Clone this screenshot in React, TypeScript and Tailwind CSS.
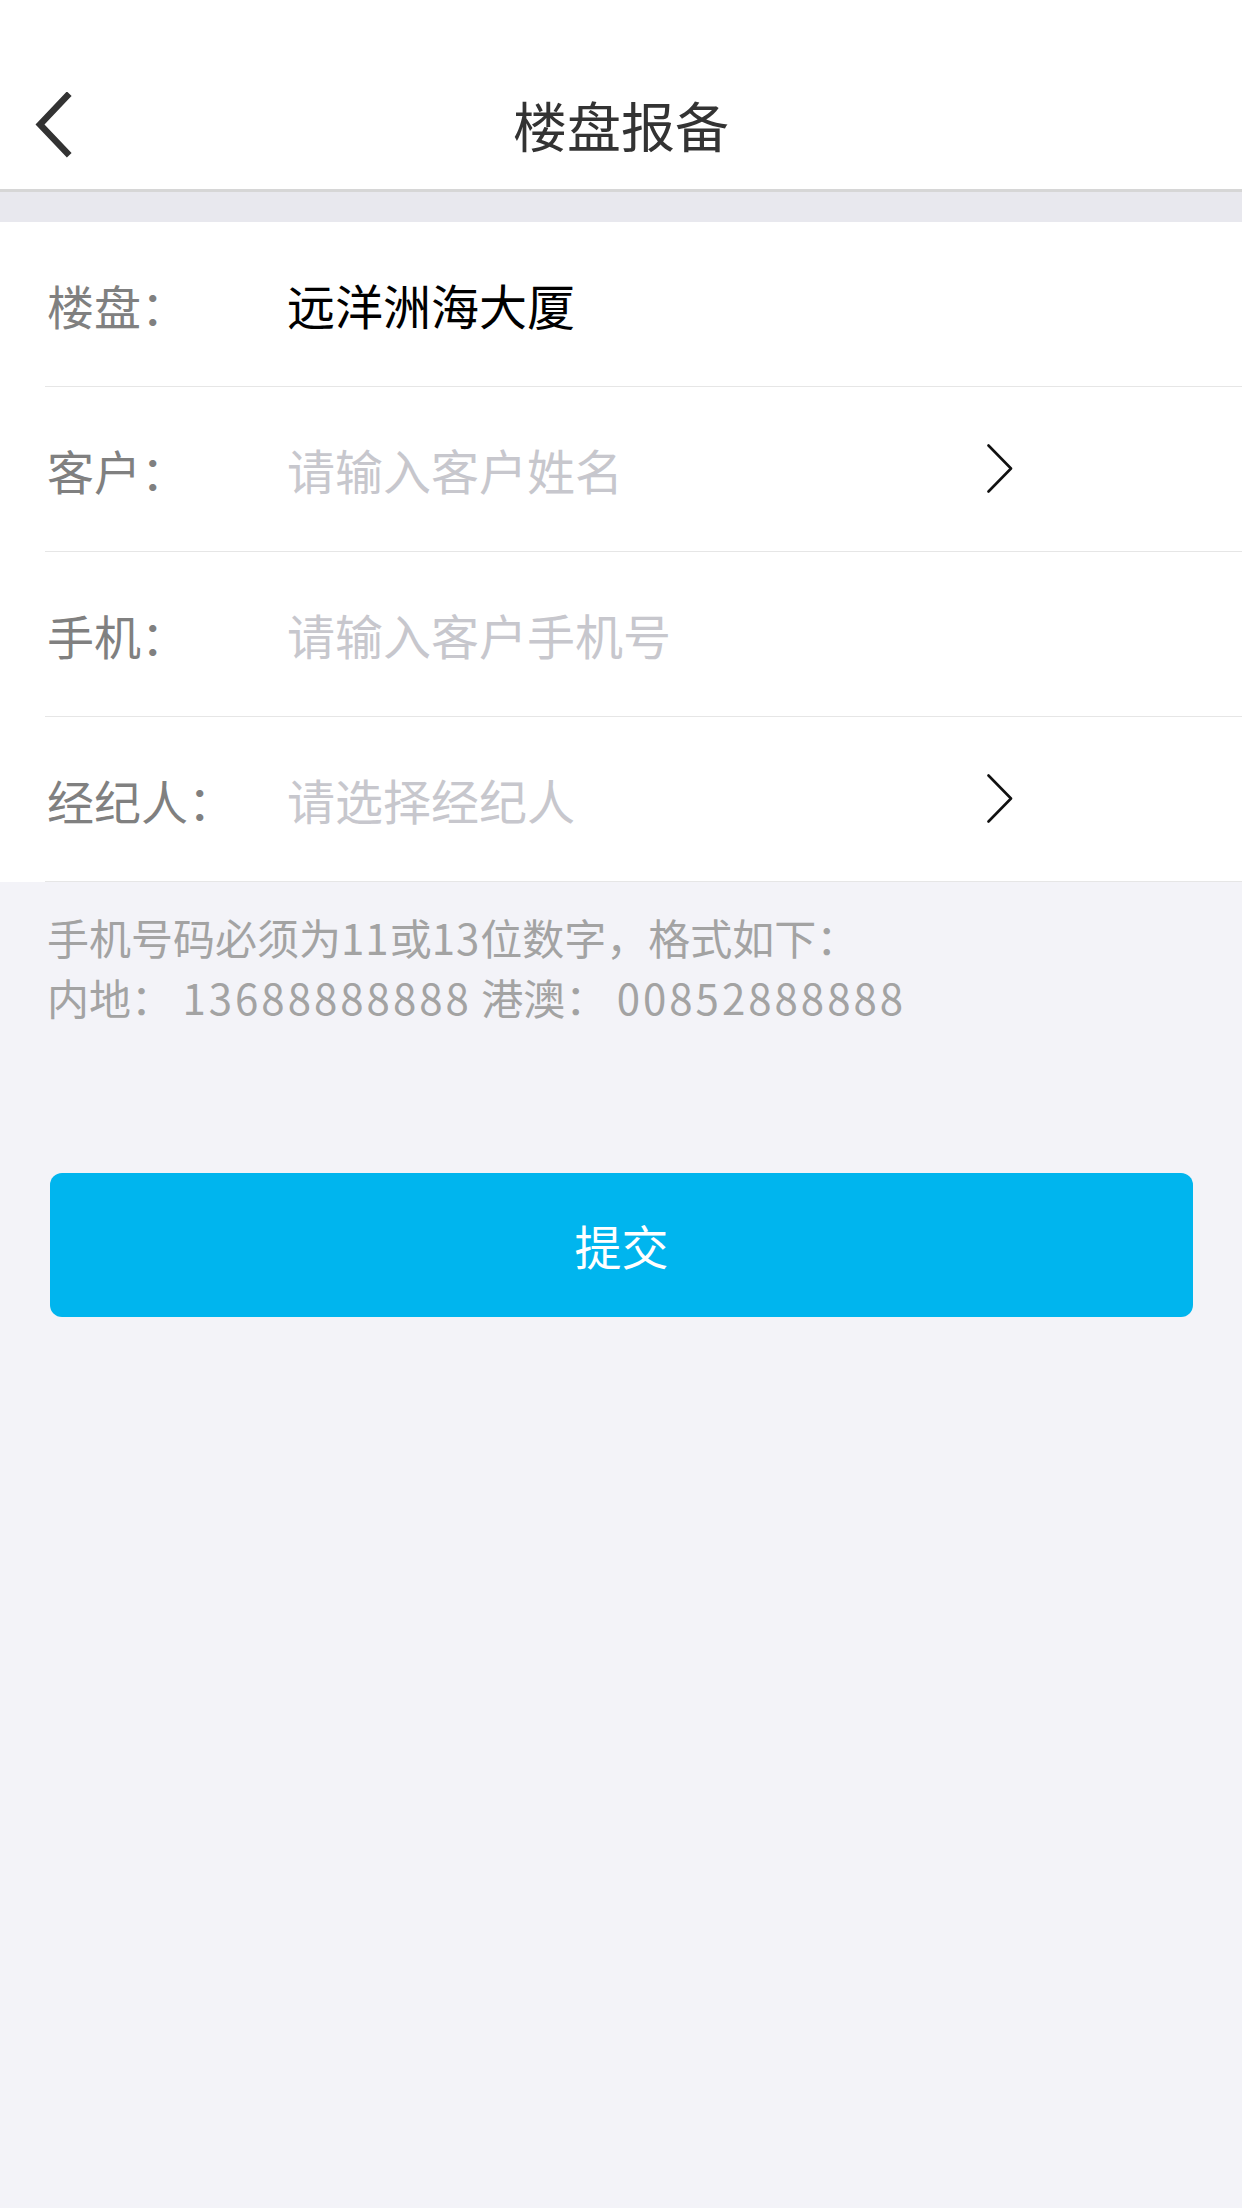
import React from 'react';

const FONT = '"Noto Sans CJK SC", "Noto Sans", sans-serif';

interface FieldRowProps {
  label: string;
  value?: string;
  placeholder?: string;
  arrow?: boolean;
}

const ChevronRight: React.FC = () => (
  <svg width="26" height="50" viewBox="0 0 26 50" fill="none">
    <path d="M1.5 1.5 L24 24.5 L1.5 47.5" stroke="#111" strokeWidth="2.6" strokeLinecap="round" strokeLinejoin="round" />
  </svg>
);

const FieldRow: React.FC<FieldRowProps> = ({ label, value, placeholder, arrow }) => (
  <div className="ml-[45px] pl-[2px] h-[165px] flex items-center border-b border-[#e6e6e6]">
    <span className="w-[240px] shrink-0 text-[47px] text-[#808080] leading-none">{label}</span>
    <div className="w-[700px] shrink-0 flex items-center">
      {value ? (
        <span className="text-[48px] text-black leading-none">{value}</span>
      ) : (
        <span className="text-[48px] text-[#c7c7cd] leading-none">{placeholder}</span>
      )}
    </div>
    {arrow && (
      <div className="flex items-center">
        <ChevronRight />
      </div>
    )}
  </div>
);

export default function App() {
  return (
    <div className="min-h-[2208px] w-[1242px] bg-[#f3f3f8]" style={{ fontFamily: FONT }}>
      {/* header */}
      <div className="h-[192px] bg-white border-b-[3px] border-[#d6d6d6] pt-[60px]">
        <div className="relative h-[129px] flex items-center justify-center">
          <button className="absolute left-[30px] top-0 h-full flex items-center">
            <svg width="46" height="66" viewBox="0 0 46 66" fill="none">
              <path d="M37 4 L10 32.5 L37 61" stroke="#333" strokeWidth="6.5" strokeLinecap="square" />
            </svg>
          </button>
          <h1 className="text-[54px] text-[#333] font-normal leading-none">楼盘报备</h1>
        </div>
      </div>

      <div className="h-[30px] bg-[#e8e8ee]" />

      <div className="bg-white">
        <FieldRow label="楼盘：" value="远洋洲海大厦" />
        <FieldRow label="客户：" placeholder="请输入客户姓名" arrow />
        <FieldRow label="手机：" placeholder="请输入客户手机号" />
        <FieldRow label="经纪人：" placeholder="请选择经纪人" arrow />
      </div>

      <div className="px-[47px] pt-[25px] text-[42px] leading-[60px] text-[#a3a3a3]">
        <p>
          手机号码必须为<span className="tracking-[1px]">11</span>或<span className="tracking-[1px]">13</span>位数字，格式如下：
        </p>
        <p>
          内地： <span className="tracking-[3px]">13688888888</span> 港澳： <span className="tracking-[3px]">00852888888</span>
        </p>
      </div>

      <div className="pl-[50px] pr-[49px] mt-[146px]">
        <button className="w-full h-[144px] rounded-[12px] bg-[#00b5ee] text-white text-[47px] flex items-center justify-center">
          提交
        </button>
      </div>
    </div>
  );
}
